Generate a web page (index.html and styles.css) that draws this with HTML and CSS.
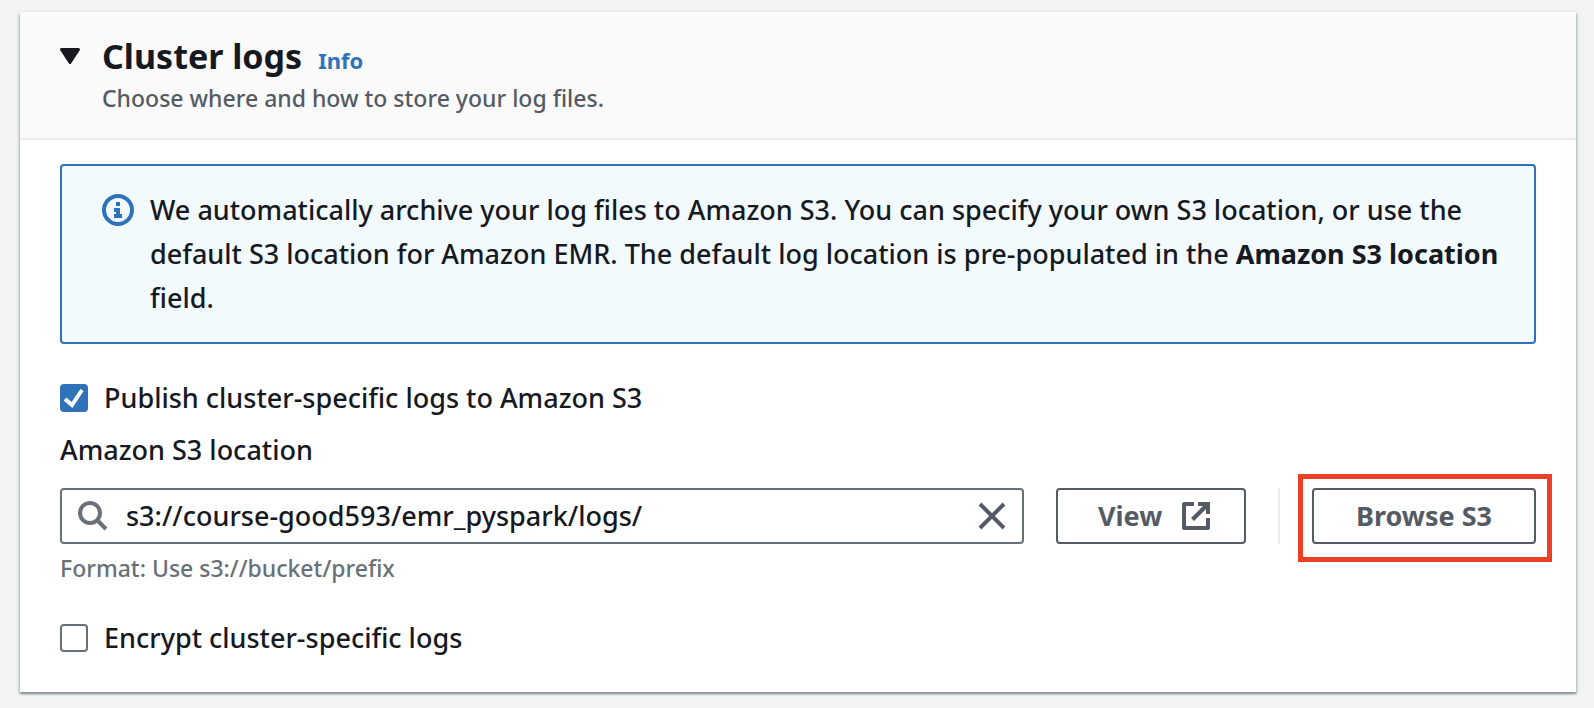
FILE: index.html
```html
<!DOCTYPE html>
<html lang="en">
<head>
<meta charset="utf-8">
<title>Cluster logs</title>
<link rel="stylesheet" href="styles.css">
</head>
<body>
<section class="card">
  <header class="card-header">
    <button class="toggle" type="button" aria-label="Collapse cluster logs" aria-expanded="true">
      <svg width="20" height="16" viewBox="0 0 20 16" aria-hidden="true"><path d="M1.500 1.500h17L10 14.500z" fill="#16191f" stroke="#16191f" stroke-width="3" stroke-linejoin="round"/></svg>
    </button>
    <div class="heading">
      <div class="title-row">
        <h2 class="title">Cluster logs</h2>
        <a class="info" href="#">Info</a>
      </div>
      <p class="description">Choose where and how to store your log files.</p>
    </div>
  </header>
  <div class="card-body">
    <div class="alert" role="note">
      <svg class="alert-icon" width="32" height="32" viewBox="0 0 32 32" aria-hidden="true"><circle cx="16" cy="16" r="14" fill="none" stroke="#2e73b8" stroke-width="4"/><path d="M14 8h4v4h-4zM12 14h6v6h2v4h-8v-4h2v-2h-2z" fill="#2e73b8"/></svg>
      <p class="alert-text">We automatically archive your log files to Amazon S3. You can specify your own S3 location, or use the default S3 location for Amazon EMR. The default log location is pre-populated in the <b>Amazon S3 location</b> field.</p>
    </div>
    <label class="check-row">
      <span class="check"><input class="check-input" type="checkbox" checked><svg class="check-mark" viewBox="0 0 28 28" aria-hidden="true"><path d="M5 15l7 6L22 6" fill="none" stroke="#fff" stroke-width="4"/></svg></span>
      <span>Publish cluster-specific logs to Amazon S3</span>
    </label>
    <div class="field">
      <label class="field-label" for="location">Amazon S3 location</label>
      <div class="controls">
        <div class="search">
          <svg width="30" height="30" viewBox="0 0 30 30" aria-hidden="true"><circle cx="12" cy="12" r="10" fill="none" stroke="#687078" stroke-width="4"/><path d="M19 19l9 9" stroke="#687078" stroke-width="4"/></svg>
          <input class="search-input" id="location" type="text" value="s3://course-good593/emr_pyspark/logs/" spellcheck="false">
          <button class="clear" type="button" aria-label="Clear">
            <svg width="28" height="28" viewBox="0 0 28 28" aria-hidden="true"><path d="M2 2l24 24M26 2L2 26" stroke="#545b64" stroke-width="4"/></svg>
          </button>
        </div>
        <button class="button view" type="button">View
          <svg width="28" height="28" viewBox="0 0 28 28" aria-hidden="true"><path d="M12 2H2v24h24V16" fill="none" stroke="#545b64" stroke-width="4" stroke-linejoin="round"/><path d="M16 0h12v12h-4V7L12 19l-3-3L21 4h-5z" fill="#545b64"/></svg>
        </button>
        <div class="browse-group">
          <button class="button browse" type="button">Browse S3</button>
        </div>
      </div>
      <p class="hint">Format: Use s3://bucket/prefix</p>
    </div>
    <label class="check-row">
      <span class="check"><input class="check-input" type="checkbox"></span>
      <span>Encrypt cluster-specific logs</span>
    </label>
  </div>
</section>
</body>
</html>
```
FILE: styles.css
```css
* { box-sizing: border-box; }
body {
  margin: 0;
  padding: 12px 18px 16px 20px;
  background: #f2f3f3;
  color: #16191f;
  font-family: "Noto Sans", "Open Sans", sans-serif;
  font-size: 27px;
  font-weight: 500;
  line-height: 44px;
}
h2, p { margin: 0; }
b { font-weight: 700; }
button, input { font: inherit; color: inherit; }
svg { display: block; flex: none; }
.card {
  background: #fff;
  box-shadow: 0 2px 2px #879196, 2px 2px 2px #d5dbdb, -2px 2px 2px #d5dbdb, 0 -2px 0 #eaeded;
}
.card-header {
  display: flex;
  gap: 22px;
  padding: 20px 40px 24px;
  background: #fafafa;
  border-bottom: 2px solid #eaeded;
}
.toggle {
  align-self: flex-start;
  margin-top: 16px;
  padding: 0;
  border: 0;
  background: none;
}
.title-row { display: flex; align-items: baseline; gap: 16px; }
.title { font-size: 34px; line-height: 48px; }
.info {
  color: #2e73b8;
  font-size: 22px;
  font-weight: 700;
  line-height: 32px;
  text-decoration: none;
}
.description { margin-top: 2px; color: #545b64; font-size: 23px; line-height: 32px; }
.card-body { padding: 24px 40px 32px; }
.alert {
  display: flex;
  gap: 16px;
  margin-bottom: 32px;
  padding: 22px 24px 22px 40px;
  border: 2px solid #2e73b8;
  border-radius: 4px;
  background: #f2fafd;
}
.alert-icon { margin-top: 6px; }
.check-row { display: flex; align-items: center; gap: 16px; }
.check { position: relative; display: block; width: 28px; height: 28px; }
.check-input {
  appearance: none;
  display: block;
  width: 28px;
  height: 28px;
  margin: 0;
  border: 2px solid #687078;
  border-radius: 4px;
  background: #fff;
}
.check-input:checked { border-color: #2e73b8; background: #2e73b8; }
.check-mark { position: absolute; inset: 0; pointer-events: none; }
.field { margin: 8px 0 32px; }
.field-label { display: block; margin-bottom: 16px; }
.controls { display: flex; gap: 32px; }
.search {
  display: flex;
  flex: 1;
  align-items: center;
  gap: 18px;
  min-width: 0;
  height: 56px;
  padding: 0 16px;
  border: 2px solid #687078;
  border-radius: 4px;
  background: #fff;
}
.search-input {
  flex: 1;
  min-width: 0;
  padding: 0;
  border: 0;
  outline: 0;
  background: none;
}
.clear { padding: 0; border: 0; background: none; }
.button {
  display: flex;
  align-items: center;
  justify-content: center;
  height: 56px;
  border: 2px solid #545b64;
  border-radius: 4px;
  background: #fff;
  color: #545b64;
  font-weight: 700;
}
.view {
  justify-content: space-between;
  width: 190px;
  padding: 0 34px 0 40px;
}
.browse-group { padding-left: 32px; border-left: 2px solid #eaeded; }
.browse { position: relative; width: 224px; }
.browse::after {
  content: "";
  position: absolute;
  inset: -16px -18px -20px -16px;
  border: 5px solid #eb4026;
}
.hint { margin-top: 8px; color: #687078; font-size: 23px; line-height: 32px; }
```
